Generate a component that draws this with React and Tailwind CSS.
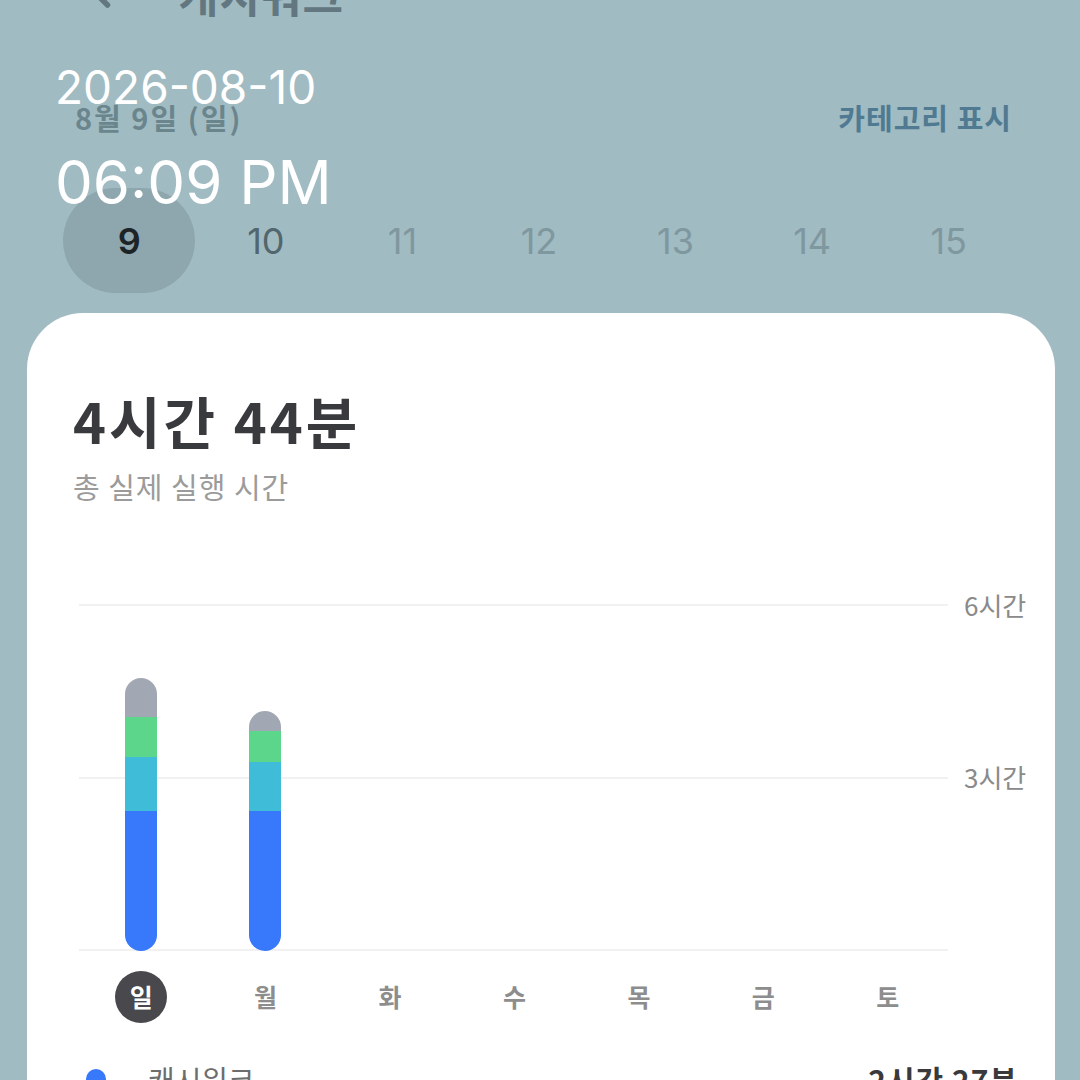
import { ChevronLeft } from 'lucide-react';

const dates = [9, 10, 11, 12, 13, 14, 15];
const days = ['일', '월', '화', '수', '목', '금', '토'];

// stacked bars per weekday, px heights top to bottom (gray, green, cyan, blue)
const bars = [
  [39, 40, 54, 140],
  [20, 31, 49, 140],
];
const segColors = ['bg-[#a2a8b3]', 'bg-[#5bd68a]', 'bg-[#3ebcd8]', 'bg-[#3878fb]'];

const kr = { fontFamily: '"Noto Sans CJK KR", "Noto Sans", sans-serif' };

export default function App() {
  return (
    <div className="relative h-[1080px] w-[1080px] overflow-hidden bg-[#a1bbc2]" style={kr}>
      {/* header, mostly scrolled off the top */}
      <div className="-mt-[42px] flex h-[60px] items-end pl-[80px] text-[#62777f]">
        <ChevronLeft size={44} strokeWidth={3} className="mb-[2px]" />
        <span className="ml-[54px] text-[44px] font-bold leading-[48px] tracking-[1px]">캐시워크</span>
      </div>

      <div className="mt-[80px] flex h-[40px] items-center justify-between pl-[75px] pr-[68px]">
        <span className="text-[29px] font-bold tracking-[2px] text-[#6b858d]">8월 9일 (일)</span>
        <span className="text-[29px] font-bold tracking-[1px] text-[#4f7a91]">카테고리 표시</span>
      </div>

      <div className="ml-[61px] mt-[50px] grid h-[105px] w-[956px] grid-cols-7">
        {dates.map((d, i) => (
          <div key={d} className="flex items-center justify-center">
            <div
              className={`flex h-[105px] w-[132px] items-center justify-center rounded-full text-[36px] ${
                i === 0 ? 'bg-[#8ea6ad] font-semibold text-[#1d2427]' : i === 1 ? 'text-[#52666d]' : 'text-[#7f979e]'
              }`}
              style={{ fontFamily: 'Inter, "Noto Sans", sans-serif' }}
            >
              {d}
            </div>
          </div>
        ))}
      </div>

      {/* summary card */}
      <div className="ml-[27px] mt-[20px] h-[900px] w-[1028px] rounded-t-[56px] bg-white pt-[76px]">
        <div className="pl-[46px]">
          <div className="text-[56px] font-bold leading-[62px] tracking-[3px] text-[#393a3d]">4시간 44분</div>
          <div className="mt-[17px] text-[29px] leading-[36px] tracking-[1px] text-[#9b9b9b]">총 실제 실행 시간</div>
        </div>

        <div className="mt-[100px] flex pl-[52px]">
          <div className="relative h-[347px] w-[869px]">
            <div className="flex h-full flex-col justify-between">
              <div className="h-[2px] bg-[#f1f1f1]" />
              <div className="h-[2px] bg-[#f1f1f1]" />
              <div className="h-[2px] bg-[#f1f1f1]" />
            </div>
            <div className="absolute inset-x-0 bottom-0 grid h-full grid-cols-7 items-end">
              {days.map((d, i) => (
                <div key={d} className="flex justify-center">
                  {bars[i] && (
                    <div className="flex w-[32px] flex-col overflow-hidden rounded-full">
                      {bars[i].map((h, j) => (
                        <div key={j} className={segColors[j]} style={{ height: h }} />
                      ))}
                    </div>
                  )}
                </div>
              ))}
            </div>
          </div>
          <div className="-mt-[16px] ml-[16px] flex h-[206px] flex-col justify-between text-[26px] leading-[34px] text-[#8a8a8a]">
            <span>6시간</span>
            <span>3시간</span>
          </div>
        </div>

        <div className="ml-[52px] mt-[20px] grid w-[871px] grid-cols-7">
          {days.map((d, i) => (
            <div key={d} className="flex justify-center">
              <div
                className={`flex h-[52px] w-[52px] items-center justify-center rounded-full text-[25px] font-semibold ${
                  i === 0 ? 'bg-[#48484d] text-white' : 'text-[#8d8d8d]'
                }`}
              >
                {d}
              </div>
            </div>
          ))}
        </div>

        <div className="mt-[38px] flex items-center justify-between pl-[59px] pr-[37px]">
          <div className="flex items-center">
            <span className="h-[20px] w-[20px] rounded-full bg-[#3878fb]" />
            <span className="ml-[42px] text-[29px] leading-[36px] text-[#6d6d6d]">캐시워크</span>
          </div>
          <span className="text-[30px] font-bold leading-[36px] tracking-[1px] text-[#3a3a3c]">2시간 27분</span>
        </div>
      </div>

      {/* capture overlay */}
      <div className="absolute left-[55px] top-[60px] text-white" style={{ fontFamily: 'Inter, Roboto, sans-serif' }}>
        <div className="text-[46px] leading-[54px]">2026-08-10</div>
        <div className="mt-[36px] text-[60px] leading-[64px]">06:09 PM</div>
      </div>
    </div>
  );
}
